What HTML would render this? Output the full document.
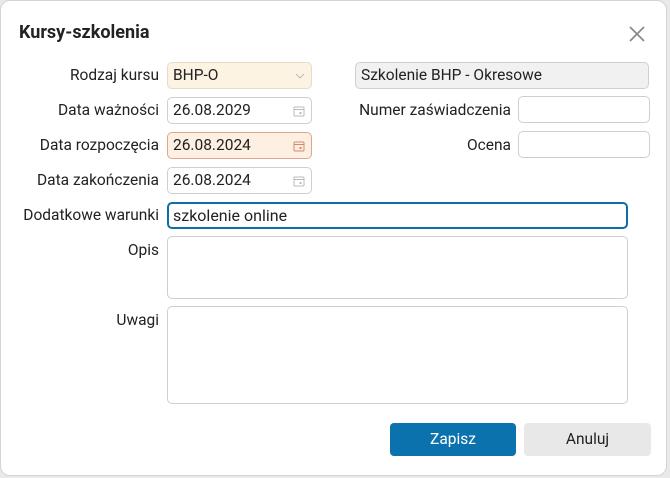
<!DOCTYPE html>
<html><head><meta charset="utf-8"><style>
*{box-sizing:border-box;margin:0;padding:0}
body{width:670px;height:478px;background:#e9e9e9;font-family:"Roboto","Liberation Sans",sans-serif;font-size:15.5px;color:#222;position:relative;overflow:hidden}
.dlg{position:absolute;left:0;top:0;width:667px;height:476px;background:#fff;border-radius:10px;border:1px solid #d4d4d4}
.t{position:absolute;left:18px;top:21px;font-size:18px;font-weight:bold;color:#222}
.lbl{position:absolute;text-align:right;line-height:26px}
.in{position:absolute;height:27px;border:1px solid #cfcfcf;border-radius:5px;background:#fff;line-height:25px;padding-left:5px}
.ic{position:absolute;right:6px;top:7px}
.btn{position:absolute;top:422px;height:33px;border-radius:4px;text-align:center;line-height:33px;font-size:15.5px}
</style></head><body>
<div class="dlg">
<div class="t">Kursy-szkolenia</div>
<svg style="position:absolute;left:627px;top:24px" width="18" height="18" viewBox="0 0 18 18"><path d="M2 2L16 16M16 2L2 16" stroke="#8a8a8a" stroke-width="1.8"/></svg>

<div class="lbl" style="left:0;width:158px;top:61px">Rodzaj kursu</div>
<div class="in" style="left:166px;top:61px;width:145px;background:#fdf3e3;border-color:#e5dcc9">BHP-O<svg class="ic" style="top:9px" width="10" height="8" viewBox="0 0 10 8"><path d="M1 2L5 6L9 2" stroke="#bbb" fill="none"/></svg></div>
<div class="in" style="left:354px;top:61px;width:294px;background:#f1f1f1;border-color:#cfcfcf">Szkolenie BHP - Okresowe</div>

<div class="lbl" style="left:0;width:158px;top:96px">Data ważności</div>
<div class="in" style="left:166px;top:96px;width:145px">26.08.2029<svg class="ic" width="12" height="12" viewBox="0 0 12 12"><rect x="1" y="2" width="10" height="9" rx="1" fill="none" stroke="#bbb"/><path d="M1 4.5H11" stroke="#bbb"/><rect x="6.5" y="7" width="2" height="2" fill="#bbb"/></svg></div>
<div class="lbl" style="left:320px;width:190px;top:96px">Numer zaświadczenia</div>
<div class="in" style="left:517px;top:95px;width:132px"></div>

<div class="lbl" style="left:0;width:158px;top:131px">Data rozpoczęcia</div>
<div class="in" style="left:166px;top:131px;width:145px;background:#fdf0e3;border-color:#e0a58d">26.08.2024<svg class="ic" width="12" height="12" viewBox="0 0 12 12"><rect x="1" y="2" width="10" height="9" rx="1" fill="none" stroke="#d6866a"/><path d="M1 4.5H11" stroke="#d6866a"/><rect x="6.5" y="7" width="2" height="2" fill="#d6866a"/></svg></div>
<div class="lbl" style="left:320px;width:190px;top:131px">Ocena</div>
<div class="in" style="left:517px;top:130px;width:132px"></div>

<div class="lbl" style="left:0;width:158px;top:166px">Data zakończenia</div>
<div class="in" style="left:166px;top:166px;width:145px">26.08.2024<svg class="ic" width="12" height="12" viewBox="0 0 12 12"><rect x="1" y="2" width="10" height="9" rx="1" fill="none" stroke="#bbb"/><path d="M1 4.5H11" stroke="#bbb"/><rect x="6.5" y="7" width="2" height="2" fill="#bbb"/></svg></div>

<div class="lbl" style="left:0;width:158px;top:201px">Dodatkowe warunki</div>
<div class="in" style="left:166px;top:201px;width:461px;border:2px solid #0e6fa6;line-height:23px;padding-left:4px;font-size:16px">szkolenie online</div>

<div class="lbl" style="left:0;width:158px;top:236px">Opis</div>
<div class="in" style="left:166px;top:235px;width:461px;height:63px"></div>

<div class="lbl" style="left:0;width:158px;top:306px">Uwagi</div>
<div class="in" style="left:166px;top:305px;width:461px;height:98px"></div>

<div class="btn" style="left:389px;width:126px;background:#0b72ae;color:#fff">Zapisz</div>
<div class="btn" style="left:523px;width:127px;background:#e8e8e8;color:#222">Anuluj</div>
</div>
</body></html>
